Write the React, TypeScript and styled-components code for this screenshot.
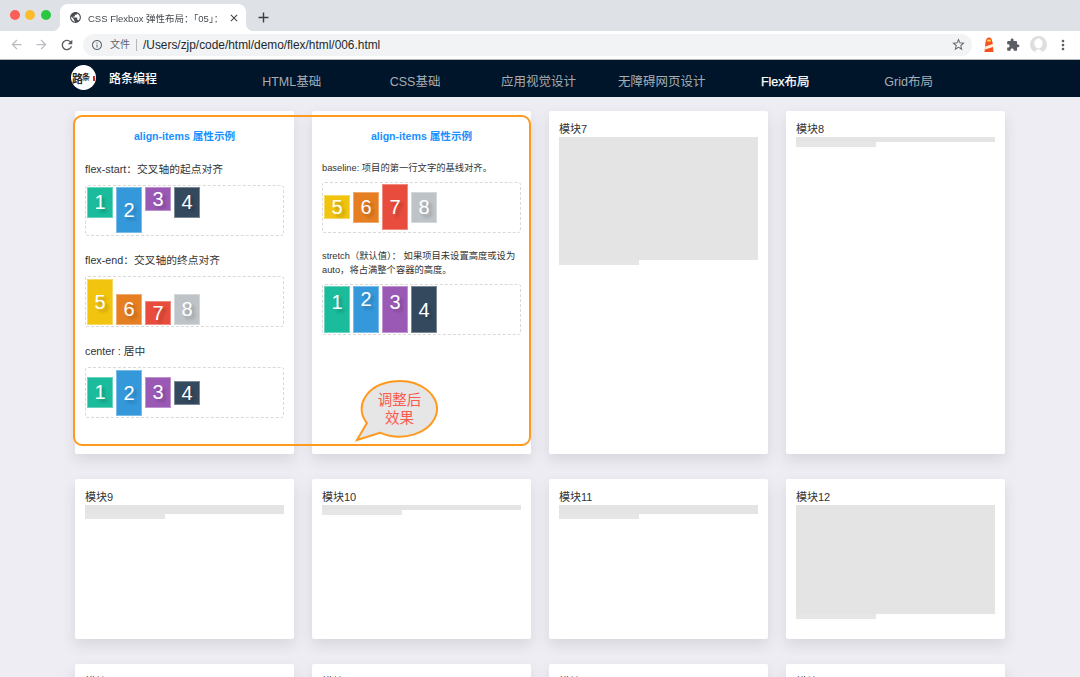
import React from "react";
import styled, { createGlobalStyle } from "styled-components";
import {
  MdAdd,
  MdArrowBack,
  MdArrowForward,
  MdClose,
  MdExtension,
  MdInfoOutline,
  MdMoreVert,
  MdPublic,
  MdRefresh,
  MdStarBorder,
} from "react-icons/md";

const sans = `"Liberation Sans", "Noto Sans CJK SC", sans-serif`;

const GlobalStyle = createGlobalStyle`
  html, body {
    margin: 0;
    height: 100%;
    overflow: hidden;
    background: #eeedf3;
    font-family: ${sans};
  }
  * { box-sizing: border-box; }
`;

const Window = styled.div`
  width: 1080px;
  height: 677px;
  overflow: hidden;
  display: flex;
  flex-direction: column;
`;

/* browser chrome */
const TabStrip = styled.div`
  height: 31px;
  flex: none;
  background: #dee1e6;
  display: flex;
  align-items: flex-end;
`;

const Lights = styled.div`
  width: 60px;
  height: 31px;
  padding: 10px 0 0 9.5px;
  display: flex;
  gap: 5.5px;
`;

const Light = styled.span<{ $color: string }>`
  width: 10px;
  height: 10px;
  border-radius: 50%;
  background: ${(p) => p.$color};
`;

const Tab = styled.div`
  position: relative;
  width: 186px;
  height: 27px;
  background: #fff;
  border-radius: 8px 8px 0 0;
  display: flex;
  align-items: center;
  padding: 0 6px 0 9px;
  color: #45494d;
  &::before,
  &::after {
    content: "";
    position: absolute;
    bottom: 0;
    width: 8px;
    height: 8px;
  }
  &::before {
    left: -8px;
    background: radial-gradient(circle at 0 0, transparent 8px, #fff 8.5px);
  }
  &::after {
    right: -8px;
    background: radial-gradient(circle at 100% 0, transparent 8px, #fff 8.5px);
  }
`;

const TabTitle = styled.div`
  flex: 1;
  margin: 0 -3px 0 6px;
  font-size: 9.5px;
  white-space: nowrap;
  overflow: hidden;
  -webkit-mask-image: linear-gradient(to right, #000 90%, transparent 100%);
  mask-image: linear-gradient(to right, #000 90%, transparent 100%);
`;

const NewTab = styled.div`
  width: 34px;
  height: 27px;
  display: flex;
  align-items: center;
  justify-content: center;
  color: #3c4043;
`;

const Toolbar = styled.div`
  height: 29px;
  flex: none;
  background: #fff;
  border-bottom: 1px solid #b4b6b9;
  display: flex;
  align-items: center;
  padding: 0 8px 1px 9px;
`;

const NavIcon = styled.span<{ $off?: boolean; $w?: number }>`
  width: ${(p) => p.$w ?? 25}px;
  display: flex;
  color: ${(p) => (p.$off ? "#b9bcc0" : "#5a5e63")};
`;

const Omnibox = styled.div`
  width: 889px;
  height: 22px;
  margin-left: 7px;
  border-radius: 11px;
  background: #f1f3f4;
  display: flex;
  align-items: center;
  padding: 0 6px 0 8px;
  color: #5f6368;
`;

const Scheme = styled.span`
  margin-left: 7px;
  font-size: 10px;
  color: #5f6368;
  padding-right: 6px;
  border-right: 1px solid #b5b8bb;
  line-height: 12px;
`;

const Url = styled.span`
  flex: 1;
  margin-left: 6px;
  font-size: 11.9px;
  color: #25282b;
`;

const ToolIcons = styled.div`
  flex: 1;
  display: flex;
  align-items: center;
  padding-left: 10px;
  gap: 10px;
  color: #5a5e63;
`;

const MoreSlot = styled.span`
  display: flex;
  margin-left: -2px;
`;

const Avatar = styled.span`
  width: 17px;
  height: 17px;
  border-radius: 50%;
  background: #dcdee0;
  display: flex;
  overflow: hidden;
`;

/* site nav */
const SiteNav = styled.nav`
  height: 37px;
  flex: none;
  background: #001529;
  display: flex;
  align-items: center;
  padding-left: 71px;
`;

const Brand = styled.div`
  width: 159px;
  display: flex;
  align-items: center;
  gap: 13px;
  color: #fff;
  font-size: 12px;
  font-weight: 500;
  margin-top: -2px;
`;

const LogoDisc = styled.div`
  position: relative;
  width: 25px;
  height: 25px;
  border-radius: 50%;
  background: #fff;
  color: #2a2a2a;
  font-family: "Noto Sans CJK SC", serif;
  font-size: 11px;
  font-weight: 700;
  letter-spacing: -1px;
  display: flex;
  align-items: center;
  padding-left: 1px;
  &::after {
    content: "";
    position: absolute;
    right: 1.5px;
    top: 11px;
    width: 2px;
    height: 5px;
    background: #c62828;
  }
`;

const LogoSmall = styled.span`
  font-size: 8px;
  margin-top: -3px;
`;

const Menu = styled.div`
  display: flex;
  padding-top: 3px;
`;

const MenuItem = styled.a<{ $active?: boolean }>`
  width: 123.4px;
  text-align: center;
  font-size: 12.5px;
  color: ${(p) => (p.$active ? "#fff" : "#a6adb4")};
  -webkit-text-stroke: ${(p) => (p.$active ? "0.25px #fff" : "0")};
  white-space: nowrap;
`;

/* page */
const Main = styled.main`
  position: relative;
  flex: 1;
  padding: 14px 0 0 75px;
  overflow: hidden;
`;

const Grid = styled.div`
  display: grid;
  grid-template-columns: repeat(4, 219px);
  grid-auto-rows: min-content;
  gap: 25px 18px;
`;

const Card = styled.section<{ $h: number }>`
  height: ${(p) => p.$h}px;
  background: #fff;
  border-radius: 2px;
  box-shadow: 0 6px 14px rgba(60, 60, 80, 0.13);
  padding: 10px;
  color: #333;
`;

const CardLabel = styled.div`
  font-size: 11px;
  line-height: 16px;
`;

const BarMain = styled.div<{ $h: number }>`
  height: ${(p) => p.$h}px;
  background: #e4e4e4;
`;

const BarTail = styled.div`
  width: 80px;
  height: 5px;
  background: #e6e6e6;
`;

const DemoTitle = styled.h3`
  margin: 8px 0 0;
  font-size: 10.6px;
  line-height: 14px;
  font-weight: 700;
  text-align: center;
  color: #1890ff;
`;

const Label = styled.p<{ $top?: number }>`
  margin: ${(p) => p.$top ?? 17}px 0 9px;
  font-size: 10.75px;
  line-height: 14px;
  color: #333;
`;

const Desc = styled.p<{ $top: number }>`
  margin: ${(p) => p.$top}px 0 7px;
  font-size: 9.3px;
  line-height: 14px;
  color: #333;
`;

const FlexBox = styled.div<{ $align: string }>`
  height: 51px;
  border: 1px dashed #d9d9d9;
  border-radius: 3px;
  padding: 1px;
  display: flex;
  gap: 3px;
  align-items: ${(p) => p.$align};
`;

const Item = styled.div<{ $color: string; $h?: number; $lh: number }>`
  width: 26px;
  height: ${(p) => (p.$h ? `${p.$h}px` : "auto")};
  line-height: ${(p) => p.$lh}px;
  background: ${(p) => p.$color};
  border: 1px solid rgba(255, 255, 255, 0.35);
  color: #fff;
  font-size: 20px;
  text-align: center;
  text-shadow: 3px 3px 3px rgba(0, 0, 0, 0.2);
`;

const Callout = styled.div`
  position: absolute;
  left: 73px;
  top: 18px;
  width: 458px;
  height: 331px;
  border: 2px solid #ff9a1e;
  border-radius: 9px;
  pointer-events: none;
`;

const Bubble = styled.div`
  position: absolute;
  left: 355px;
  top: 282px;
  width: 85px;
  height: 64px;
`;

const BubbleText = styled.div`
  position: absolute;
  left: 6px;
  top: 12px;
  width: 77px;
  text-align: center;
  font-size: 14.5px;
  line-height: 18px;
  color: #fb5a4c;
`;

const TEAL = "#1abc9c";
const BLUE = "#3498db";
const PURPLE = "#9b59b6";
const NAVY = "#34495e";
const YELLOW = "#f1c40f";
const ORANGE = "#e67e22";
const RED = "#e74c3c";
const SILVER = "#bdc3c7";

const cool = [TEAL, BLUE, PURPLE, NAVY];
const warm = [YELLOW, ORANGE, RED, SILVER];

const coolHeights = [31, 46, 24, 31];
const warmHeights = [46, 31, 24, 31];

const placeholders = [
  { name: "模块9", h: 9 },
  { name: "模块10", h: 5 },
  { name: "模块11", h: 9 },
  { name: "模块12", h: 109 },
];

const lastRow = ["模块13", "模块14", "模块15", "模块16"];

const menu = ["HTML基础", "CSS基础", "应用视觉设计", "无障碍网页设计", "Flex布局", "Grid布局"];

function Lighthouse() {
  return (
    <svg width="14" height="18" viewBox="0 0 14 18">
      <path d="M7 1.5 C9 1.5 10 3 10 5 L10.5 6 L11.5 16 L2.5 16 L3.5 6 L4 5 C4 3 5 1.5 7 1.5 Z" fill="#f4511e" />
      <rect x="5.2" y="3.6" width="3.6" height="2" fill="#ffd54f" />
      <path d="M3.2 10.5 L10.8 8 L11 11 L3 13.5 Z" fill="#fff3e0" />
    </svg>
  );
}

function AvatarGlyph() {
  return (
    <svg width="17" height="17" viewBox="0 0 17 17">
      <ellipse cx="8.5" cy="7.5" rx="4.2" ry="5" fill="#fff" />
      <path d="M5 17 C5 12 12 12 12 17 Z" fill="#fff" />
    </svg>
  );
}

export default function App() {
  return (
    <Window>
      <GlobalStyle />
      <TabStrip>
        <Lights>
          <Light $color="#fb5f57" />
          <Light $color="#fdbc2e" />
          <Light $color="#29c840" />
        </Lights>
        <Tab>
          <MdPublic size={13} color="#4a4e52" />
          <TabTitle>CSS Flexbox 弹性布局：「05」：</TabTitle>
          <MdClose size={12} color="#3c4043" />
        </Tab>
        <NewTab>
          <MdAdd size={17} />
        </NewTab>
      </TabStrip>

      <Toolbar>
        <NavIcon $off>
          <MdArrowBack size={15} />
        </NavIcon>
        <NavIcon $off>
          <MdArrowForward size={15} />
        </NavIcon>
        <NavIcon $w={17}>
          <MdRefresh size={16} />
        </NavIcon>
        <Omnibox>
          <MdInfoOutline size={12} />
          <Scheme>文件</Scheme>
          <Url>/Users/zjp/code/html/demo/flex/html/006.html</Url>
          <MdStarBorder size={15} />
        </Omnibox>
        <ToolIcons>
          <Lighthouse />
          <MdExtension size={14} />
          <Avatar>
            <AvatarGlyph />
          </Avatar>
          <MoreSlot>
            <MdMoreVert size={16} />
          </MoreSlot>
        </ToolIcons>
      </Toolbar>

      <SiteNav>
        <Brand>
          <LogoDisc>
            路<LogoSmall>条</LogoSmall>
          </LogoDisc>
          路条编程
        </Brand>
        <Menu>
          {menu.map((m) => (
            <MenuItem key={m} $active={m === "Flex布局"}>
              {m}
            </MenuItem>
          ))}
        </Menu>
      </SiteNav>

      <Main>
        <Grid>
          <Card $h={343}>
            <DemoTitle>align-items 属性示例</DemoTitle>
            <Label $top={19}>flex-start：交叉轴的起点对齐</Label>
            <FlexBox $align="flex-start">
              {cool.map((c, i) => (
                <Item key={c} $color={c} $h={coolHeights[i]} $lh={coolHeights[i] - 2}>
                  {i + 1}
                </Item>
              ))}
            </FlexBox>
            <Label>flex-end：交叉轴的终点对齐</Label>
            <FlexBox $align="flex-end">
              {warm.map((c, i) => (
                <Item key={c} $color={c} $h={warmHeights[i]} $lh={warmHeights[i] - 2}>
                  {i + 5}
                </Item>
              ))}
            </FlexBox>
            <Label>center : 居中</Label>
            <FlexBox $align="center">
              {cool.map((c, i) => (
                <Item key={c} $color={c} $h={[31, 46, 31, 24][i]} $lh={[31, 46, 31, 24][i] - 2}>
                  {i + 1}
                </Item>
              ))}
            </FlexBox>
          </Card>

          <Card $h={343}>
            <DemoTitle>align-items 属性示例</DemoTitle>
            <Desc $top={18}>baseline: 项目的第一行文字的基线对齐。</Desc>
            <FlexBox $align="baseline">
              {warm.map((c, i) => (
                <Item key={c} $color={c} $h={[24, 31, 46, 31][i]} $lh={[24, 31, 46, 31][i] - 2}>
                  {i + 5}
                </Item>
              ))}
            </FlexBox>
            <Desc $top={16}>stretch（默认值）： 如果项目未设置高度或设为auto，将占满整个容器的高度。</Desc>
            <FlexBox $align="stretch">
              {cool.map((c, i) => (
                <Item key={c} $color={c} $lh={[31, 24, 31, 46][i]}>
                  {i + 1}
                </Item>
              ))}
            </FlexBox>
          </Card>

          <Card $h={343}>
            <CardLabel>模块7</CardLabel>
            <BarMain $h={123} />
            <BarTail />
          </Card>
          <Card $h={343}>
            <CardLabel>模块8</CardLabel>
            <BarMain $h={5} />
            <BarTail />
          </Card>

          {placeholders.map((p) => (
            <Card key={p.name} $h={160}>
              <CardLabel>{p.name}</CardLabel>
              <BarMain $h={p.h} />
              <BarTail />
            </Card>
          ))}

          {lastRow.map((name) => (
            <Card key={name} $h={160}>
              <CardLabel>{name}</CardLabel>
            </Card>
          ))}
        </Grid>

        <Callout />
        <Bubble>
          <svg width="85" height="64" viewBox="0 0 85 64">
            <path
              d="M2 61 L11.9 44 A37.7 27.8 0 1 1 25 53.7 Z"
              fill="#e6e6e6"
              stroke="#ff9a1e"
              strokeWidth="2"
              strokeLinejoin="miter"
            />
          </svg>
          <BubbleText>
            调整后
            <br />
            效果
          </BubbleText>
        </Bubble>
      </Main>
    </Window>
  );
}
